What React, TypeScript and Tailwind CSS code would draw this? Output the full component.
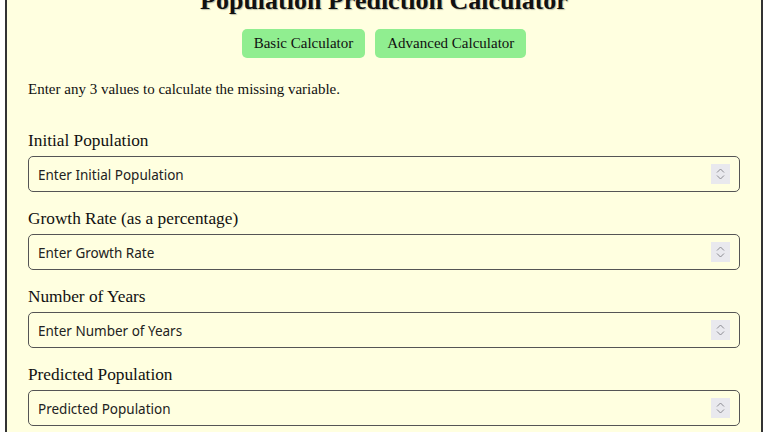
import React from "react";

const fields = [
  { label: "Initial Population", placeholder: "Enter Initial Population" },
  { label: "Growth Rate (as a percentage)", placeholder: "Enter Growth Rate" },
  { label: "Number of Years", placeholder: "Enter Number of Years" },
  { label: "Predicted Population", placeholder: "Predicted Population" },
];

function Spinner() {
  return (
    <div className="flex h-[20px] w-[19px] flex-col items-center justify-center gap-[2px] bg-[#e9e9ee]">
      <svg width="9" height="5" viewBox="0 0 9 5" fill="none">
        <path d="M1 4.5 L4.5 1 L8 4.5" stroke="#8a8a90" strokeWidth="1" />
      </svg>
      <svg width="9" height="5" viewBox="0 0 9 5" fill="none">
        <path d="M1 0.5 L4.5 4 L8 0.5" stroke="#8a8a90" strokeWidth="1" />
      </svg>
    </div>
  );
}

export default function App() {
  return (
    <div className="min-h-screen overflow-hidden bg-white" style={{ fontFamily: '"Liberation Serif", "Times New Roman", serif' }}>
      <div className="mx-[5px] -mt-[16px] border-2 border-[#333] bg-[#ffffe0] px-[21px] pb-[40px]">
        {/* header */}
        <h1 className="text-center text-[26px] font-bold leading-[30px] text-[#111] [text-shadow:1px_1px_1px_rgba(0,0,0,0.25)]">
          Population Prediction Calculator
        </h1>
        <div className="mt-[13px] flex justify-center gap-[10px]">
          <button className="h-[29px] rounded-[5px] bg-[#90ee90] px-[12px] text-[15px] text-[#111]">
            Basic Calculator
          </button>
          <button className="h-[29px] rounded-[5px] bg-[#90ee90] px-[12px] text-[15px] text-[#111]">
            Advanced Calculator
          </button>
        </div>

        <p className="mt-[22px] text-[15px] leading-[18px] text-[#111]">
          Enter any 3 values to calculate the missing variable.
        </p>

        {/* form */}
        <div className="mt-[33px] flex flex-col gap-[17px]">
          {fields.map((f) => (
            <div key={f.label} className="flex flex-col gap-[5px]">
              <label className="text-[17.3px] leading-[20px] text-[#111]">{f.label}</label>
              <div className="flex h-[36px] items-center rounded-[5px] border border-[#555] pl-[9px] pr-[9px]">
                <input
                  type="text"
                  placeholder={f.placeholder}
                  className="min-w-0 flex-1 bg-transparent pt-[2px] text-[13.5px] text-[#222] outline-none placeholder:text-[#222]"
                  style={{ fontFamily: '"Noto Sans", Tahoma, sans-serif' }}
                />
                <Spinner />
              </div>
            </div>
          ))}
        </div>
      </div>
    </div>
  );
}
